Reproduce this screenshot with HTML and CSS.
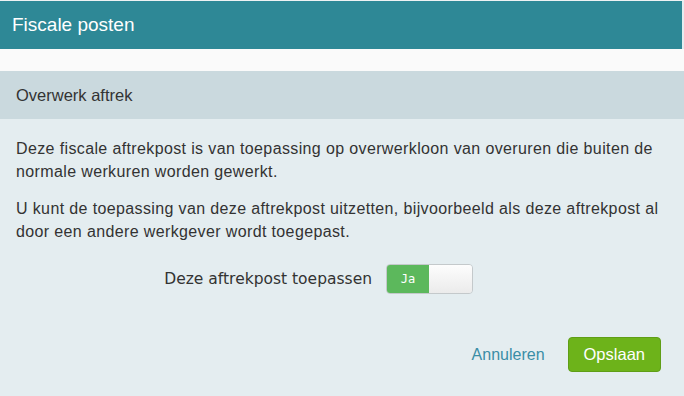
FILE: index.html
```html
<!DOCTYPE html>
<html lang="nl">

<head>
  <meta charset="UTF-8">
  <meta name="viewport" content="width=device-width, initial-scale=1.0">
  <title>Fiscale posten</title>
  <link rel="stylesheet" href="styles.css">
</head>

<body>
  <div class="modal">
    <div class="modal-header">Fiscale posten</div>
    <div class="modal-gap"></div>

    <div class="section-title">Overwerk aftrek</div>

    <div class="section-body">
      <p>Deze fiscale aftrekpost is van toepassing op overwerkloon van overuren die buiten de normale werkuren worden gewerkt.</p>
      <p>U kunt de toepassing van deze aftrekpost uitzetten, bijvoorbeeld als deze aftrekpost al door een andere werkgever wordt toegepast.</p>

      <div class="form-row">
        <label class="form-label">Deze aftrekpost toepassen</label>
        <div class="toggle">
          <span class="toggle-on">Ja</span>
          <span class="toggle-handle"></span>
        </div>
      </div>
    </div>

    <div class="modal-footer">
      <a class="cancel-link" href="#">Annuleren</a>
      <button class="save-button">Opslaan</button>
    </div>
  </div>
</body>

</html>
```

FILE: styles.css
```css
body {
  margin: 0;
  font-family: 'Liberation Sans', Arial, sans-serif;
  background-color: #e4edf0;
  color: #333;
}

.modal {
  display: flex;
  flex-direction: column;
  height: 396px;
  border-top: 1px solid #eef2f3;
  box-sizing: border-box;
}

.modal-header {
  height: 48px;
  margin-right: 2px;
  padding: 0 12px;
  display: flex;
  align-items: center;
  background-color: #2e8896;
  color: #fff;
  font-size: 19px;
}

.modal-gap {
  height: 22px;
  background-color: #fafafa;
}

.section-title {
  height: 48px;
  padding: 0 16px;
  display: flex;
  align-items: center;
  background-color: #cad9de;
  font-size: 16.5px;
}

.section-body {
  padding: 18px 16px 0;
  font-size: 16px;
  line-height: 23.3px;
}

.section-body p {
  margin: 0 0 13px;
  /* widen a bit so the lines wrap like the original */
  letter-spacing: 0.37px;
}

.form-row {
  display: grid;
  grid-template-columns: 356px auto;
  column-gap: 14px;
  align-items: center;
  margin-top: 21px;
}

.form-label {
  text-align: right;
  font-family: 'DejaVu Sans', Verdana, sans-serif;
  font-size: 15.5px;
  color: #333;
}

.toggle {
  display: flex;
  width: 87px;
  height: 30px;
  border: 1px solid #c4c9cb;
  border-radius: 4px;
  box-sizing: border-box;
  overflow: hidden;
}

.toggle-on {
  width: 42px;
  display: flex;
  align-items: center;
  justify-content: center;
  background-color: #5cb85c;
  color: #fff;
  font-family: 'DejaVu Sans Mono', monospace;
  font-size: 12px;
}

.toggle-handle {
  flex: 1;
  background: linear-gradient(#fdfdfd, #ebebeb);
}

.modal-footer {
  margin-top: auto;
  padding: 0 23px 24px;
  display: flex;
  justify-content: flex-end;
  align-items: center;
  gap: 23px;
}

.cancel-link {
  color: #3a8ea6;
  text-decoration: none;
  font-size: 16px;
}

.save-button {
  height: 35px;
  padding: 0 15px;
  background-color: #6db31a;
  border: 1px solid #5f9e16;
  border-radius: 4px;
  color: #fff;
  font-family: 'Liberation Sans', Arial, sans-serif;
  font-size: 16.5px;
  cursor: pointer;
}
```
